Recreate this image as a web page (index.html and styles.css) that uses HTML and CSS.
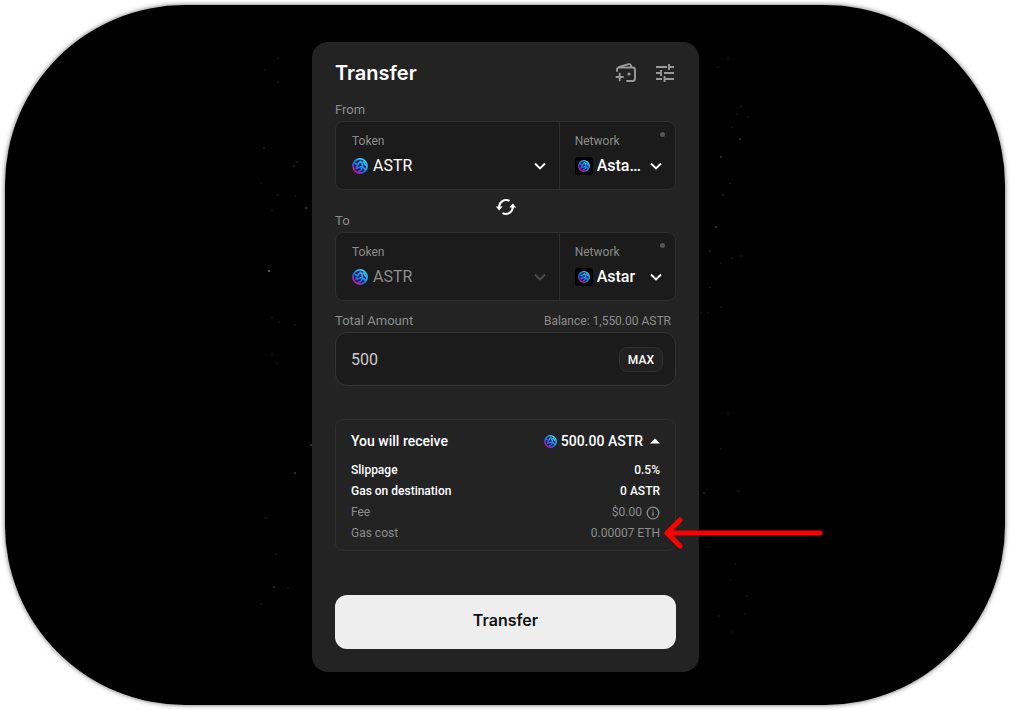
FILE: index.html
```html
<!DOCTYPE html>
<html lang="en">
<head>
<meta charset="utf-8">
<meta name="viewport" content="width=device-width, initial-scale=1">
<title>Transfer</title>
<link rel="stylesheet" href="styles.css">
</head>
<body>
<svg class="sprite" aria-hidden="true">
  <defs>
    <linearGradient id="astar-gradient" gradientUnits="userSpaceOnUse" x1="2" y1="15" x2="13" y2="2">
      <stop offset="0" stop-color="#e6007a"/>
      <stop offset="0.2" stop-color="#b020b0"/>
      <stop offset="0.42" stop-color="#1673f5"/>
      <stop offset="1" stop-color="#36d3fa"/>
    </linearGradient>
    <symbol id="astar" viewBox="0 0 16 16">
      <circle cx="8" cy="8" r="7.600" fill="#14234a"/>
      <g fill="none" stroke="url(#astar-gradient)" stroke-linecap="round">
        <circle cx="8" cy="8" r="7.100" stroke-width="1.700"/>
        <path stroke-width="1.700" d="M8.500 3.500C6 4.500 5.500 8 4 10.500M8.500 3.500C10.500 5 10.500 8 10 10M4 10.500C6.500 10 8 8.500 10 8.500M10 8.500 13 11M6.500 13.500C8.500 13 9.500 11.500 10 10M3 5.500 5.500 6.500M11.500 4 13.500 7"/>
      </g>
    </symbol>
    <symbol id="chevron" viewBox="0 0 12 8">
      <path d="M1 1.500 6 6.500 11 1.500" fill="none" stroke="currentColor" stroke-width="1.900"/>
    </symbol>
  </defs>
</svg>
<main class="stage">
  <svg class="stars" viewBox="0 0 500 700" aria-hidden="true">
    <g fill="#777"><circle cx="14" cy="266" r="1"/></g>
    <g fill="#3c3c3c">
      <circle cx="51" cy="203" r="1"/><circle cx="40" cy="468" r="1"/><circle cx="56" cy="440" r="1"/><circle cx="461" cy="222" r="1"/><circle cx="449" cy="488" r=".8"/><circle cx="19" cy="582" r=".9"/><circle cx="485" cy="134" r=".9"/><circle cx="466" cy="152" r=".9"/><circle cx="9" cy="143" r=".7"/><circle cx="11" cy="513" r=".7"/>
    </g>
    <g fill="#242424">
      <circle cx="23" cy="53" r=".8"/><circle cx="10" cy="65" r=".8"/><circle cx="23" cy="77" r=".7"/><circle cx="42" cy="157" r=".9"/><circle cx="39" cy="161" r=".9"/><circle cx="23" cy="190" r=".9"/><circle cx="40" cy="191" r=".8"/><circle cx="17" cy="205" r=".8"/><circle cx="6" cy="178" r=".8"/><circle cx="17" cy="313" r=".8"/><circle cx="24" cy="317" r=".8"/><circle cx="40" cy="320" r=".8"/><circle cx="17" cy="350" r=".8"/><circle cx="22" cy="358" r=".8"/><circle cx="33" cy="583" r=".8"/><circle cx="21" cy="549" r=".8"/><circle cx="6" cy="599" r=".8"/>
      <circle cx="473" cy="54" r=".8"/><circle cx="463" cy="62" r=".7"/><circle cx="486" cy="101" r=".8"/><circle cx="482" cy="109" r=".8"/><circle cx="477" cy="122" r=".8"/><circle cx="493" cy="112" r=".7"/><circle cx="475" cy="178" r=".8"/><circle cx="468" cy="190" r=".9"/><circle cx="455" cy="246" r="1"/><circle cx="477" cy="253" r=".8"/><circle cx="486" cy="251" r=".8"/><circle cx="466" cy="258" r=".8"/><circle cx="455" cy="282" r=".8"/><circle cx="446" cy="308" r=".8"/><circle cx="453" cy="308" r=".7"/><circle cx="466" cy="302" r=".8"/><circle cx="473" cy="408" r=".8"/><circle cx="466" cy="444" r=".8"/><circle cx="483" cy="486" r=".8"/><circle cx="453" cy="542" r=".8"/><circle cx="480" cy="559" r=".8"/><circle cx="475" cy="575" r=".8"/><circle cx="492" cy="591" r=".8"/><circle cx="464" cy="611" r=".8"/><circle cx="490" cy="609" r=".8"/><circle cx="477" cy="627" r=".8"/>
    </g>
  </svg>
  <form class="card">
    <header class="header">
      <h1 class="title">Transfer</h1>
      <div class="tools">
        <button type="button" class="icon-button" aria-label="Add wallet">
          <svg width="22" height="22" viewBox="0 0 22 22" fill="none" stroke="currentColor" stroke-width="1.900" stroke-linecap="round">
            <path d="M2 9V7.500A2 2 0 0 1 4 5.500H17.500A2.500 2.500 0 0 1 20 8V16.500A2.500 2.500 0 0 1 17.500 19H12M4 5 13.500 2.200Q16 1.600 16.200 5M1.500 15H8M4.700 11.800V18.200"/>
            <circle cx="14" cy="12" r="1.600" fill="currentColor" stroke="none"/>
          </svg>
        </button>
        <button type="button" class="icon-button" aria-label="Settings">
          <svg width="20" height="20" viewBox="0 0 20 20" fill="none" stroke="currentColor" stroke-width="1.900">
            <path d="M1 4H12M14 1V7M14 4H19M1 10H5M6 7V13M9 10H19M1 16H7M9.500 13V19M9.500 16H19"/>
          </svg>
        </button>
      </div>
    </header>

    <h2 class="section-label from-label">From</h2>
    <div class="pair">
      <div class="field token">
        <label class="field-label" for="from-token">Token</label>
        <div class="picker">
          <svg class="coin"><use href="#astar"/></svg>
          <select id="from-token" class="select"><option>ASTR</option></select>
          <svg class="chevron"><use href="#chevron"/></svg>
        </div>
      </div>
      <div class="field network">
        <label class="field-label" for="from-network">Network</label>
        <span class="status"></span>
        <div class="picker">
          <span class="chain"><svg><use href="#astar"/></svg></span>
          <select id="from-network" class="select strong"><option>Astar EVM</option></select>
          <svg class="chevron"><use href="#chevron"/></svg>
        </div>
      </div>
    </div>

    <div class="swap-row">
      <h2 class="section-label to-label">To</h2>
      <button type="button" class="icon-button swap" aria-label="Swap direction">
        <svg width="22" height="22" viewBox="0 0 22 22" fill="none" stroke="currentColor" stroke-width="2">
          <path d="M4.200 11.500A7 7 0 0 1 14.500 4.900M17.800 10.500A7 7 0 0 1 7.500 17.100"/>
          <path d="M.8 10.500H7.600L4.200 14.500ZM14.400 11.500H21.200L17.800 7.500Z" fill="currentColor" stroke="none"/>
        </svg>
      </button>
    </div>
    <div class="pair">
      <div class="field token">
        <label class="field-label" for="to-token">Token</label>
        <div class="picker muted">
          <svg class="coin"><use href="#astar"/></svg>
          <select id="to-token" class="select" disabled><option>ASTR</option></select>
          <svg class="chevron"><use href="#chevron"/></svg>
        </div>
      </div>
      <div class="field network">
        <label class="field-label" for="to-network">Network</label>
        <span class="status"></span>
        <div class="picker">
          <span class="chain"><svg><use href="#astar"/></svg></span>
          <select id="to-network" class="select strong"><option>Astar</option></select>
          <svg class="chevron"><use href="#chevron"/></svg>
        </div>
      </div>
    </div>

    <div class="amount-head">
      <label class="section-label" for="amount">Total Amount</label>
      <span class="balance">Balance: 1,550.00 ASTR</span>
    </div>
    <div class="amount">
      <input id="amount" class="amount-input" type="text" inputmode="decimal" value="500">
      <button type="button" class="max">MAX</button>
    </div>

    <section class="receipt">
      <button type="button" class="receipt-head" aria-expanded="true">
        <span>You will receive</span>
        <span class="receipt-total">
          <svg class="coin-small"><use href="#astar"/></svg>
          <span>500.00 ASTR</span>
          <svg class="caret" width="10" height="6" viewBox="0 0 10 6"><path d="M0 5.500 5 .5 10 5.500Z" fill="currentColor"/></svg>
        </span>
      </button>
      <dl class="details">
        <div class="row bright"><dt>Slippage</dt><dd>0.5%</dd></div>
        <div class="row bright"><dt>Gas on destination</dt><dd>0 ASTR</dd></div>
        <div class="row">
          <dt>Fee</dt>
          <dd>$0.00
            <svg class="info" width="14" height="14" viewBox="0 0 14 14" fill="none" stroke="currentColor" stroke-width="1.300"><circle cx="7" cy="7" r="5.800"/><path d="M7 6.200V10.200M7 3.800V5.200"/></svg>
          </dd>
        </div>
        <div class="row">
          <dt>Gas cost</dt><dd>0.00007 ETH</dd>
          <svg class="pointer" viewBox="0 0 164 34" fill="none" stroke="#f00" stroke-width="5" stroke-linecap="round" stroke-linejoin="round" aria-hidden="true"><path d="M160 17H7M20 4 7 17 20 30"/></svg>
        </div>
      </dl>
    </section>

    <button type="submit" class="submit">Transfer</button>
  </form>
</main>
</body>
</html>
```
FILE: styles.css
```css
* {
  box-sizing: border-box;
}

body {
  margin: 0;
  min-height: 100vh;
  padding: 5px;
  display: flex;
  background: #fff;
  font-family: Roboto, "Liberation Sans", sans-serif;
  font-size: 12px;
  color: #fff;
}

button,
input,
select {
  font: inherit;
  color: inherit;
  background: none;
  border: 0;
  padding: 0;
  margin: 0;
}

h1, h2, dl, dd {
  margin: 0;
}

.sprite {
  position: absolute;
  width: 0;
  height: 0;
}

.stage {
  position: relative;
  flex: 1;
  display: flex;
  justify-content: center;
  align-items: flex-start;
  padding: 37px 0 33px 1px;
  background: #000;
  border-radius: 180px;
  box-shadow: 0 0 5px rgba(0, 0, 0, 0.6);
}

.stars {
  position: absolute;
  top: 0;
  left: calc(50% - 250px);
  width: 500px;
  height: 700px;
}

.card {
  position: relative;
  width: 100%;
  max-width: 387px;
  padding: 17px 23px 23px;
  background: #232323;
  border-radius: 16px;
}

.header {
  display: flex;
  justify-content: space-between;
  align-items: center;
  height: 28px;
}

.title {
  font-family: Inter, sans-serif;
  font-size: 20px;
  font-weight: 600;
}

.tools {
  display: flex;
  align-items: center;
  gap: 18px;
  padding-right: 1px;
  color: #999;
}

.icon-button {
  display: flex;
  cursor: pointer;
}

.section-label {
  font-size: 13px;
  font-weight: 400;
  line-height: 16px;
  color: #8c8c8c;
}

.from-label {
  margin: 15px 0 3px;
}

.pair {
  display: grid;
  grid-template-columns: 224fr 117fr;
  background: #1b1b1b;
  border: 1px solid #2e2e2e;
  border-radius: 8px;
}

.field {
  position: relative;
  min-width: 0;
  padding: 11px 13px 11px 16px;
}

.network {
  border-left: 1px solid #2e2e2e;
  padding-left: 15px;
}

.field-label {
  display: block;
  margin-bottom: 5px;
  font-size: 12px;
  line-height: 16px;
  color: #8c8c8c;
}

.status {
  position: absolute;
  top: 10px;
  right: 10px;
  width: 5px;
  height: 5px;
  border-radius: 50%;
  background: #555;
}

.picker {
  display: flex;
  align-items: center;
  height: 24px;
}

.coin {
  width: 16px;
  height: 16px;
  margin-right: 5px;
}

.chain {
  display: flex;
  align-items: center;
  justify-content: center;
  flex: none;
  width: 18px;
  height: 18px;
  margin-right: 4px;
  background: #000;
  border-radius: 3px;
}

.chain svg {
  width: 12px;
  height: 12px;
}

.select {
  flex: 1;
  min-width: 0;
  appearance: none;
  font-size: 16px;
  line-height: 24px;
  overflow: hidden;
  text-overflow: ellipsis;
  white-space: nowrap;
}

.select:disabled {
  opacity: 1;
}

.strong {
  font-weight: 500;
}

.chevron {
  flex: none;
  width: 12px;
  height: 8px;
  margin-left: 6px;
}

.muted .select {
  color: #8c8c8c;
}

.muted .chevron {
  color: #4c4c4c;
}

.swap-row {
  display: grid;
  grid-template-columns: 1fr auto 1fr;
  min-height: 42px;
  padding: 6px 0 3px;
}

.to-label {
  align-self: end;
}

.swap {
  align-self: start;
}

.amount-head {
  display: flex;
  justify-content: space-between;
  margin: 12px 0 3px;
  padding-right: 5px;
}

.balance {
  line-height: 16px;
  color: #8c8c8c;
}

.amount {
  display: flex;
  align-items: center;
  height: 54px;
  padding: 0 12px 0 15px;
  background: #1b1b1b;
  border: 1px solid #333;
  border-radius: 12px;
}

.amount-input {
  flex: 1;
  min-width: 0;
  font-size: 16px;
  color: #ccc;
}

.max {
  height: 25px;
  padding: 2px 8px 0;
  background: #222;
  border: 1px solid #2e2e2e;
  border-radius: 8px;
  font-weight: 500;
}

.receipt {
  margin-top: 33px;
  padding: 11px 15px 6px;
  border: 1px solid #2e2e2e;
  border-radius: 8px;
}

.receipt-head {
  display: flex;
  justify-content: space-between;
  width: 100%;
  font-size: 14px;
  font-weight: 500;
  line-height: 20px;
}

.receipt-total {
  display: flex;
  align-items: center;
}

.coin-small {
  width: 13px;
  height: 13px;
  margin-right: 4px;
}

.caret {
  margin-left: 7px;
}

.details {
  margin-top: 9px;
}

.row {
  position: relative;
  display: flex;
  justify-content: space-between;
  line-height: 21px;
  color: #8c8c8c;
}

.row dd {
  display: flex;
  align-items: center;
  gap: 4px;
}

.bright {
  font-weight: 500;
  color: #fff;
}

.pointer {
  position: absolute;
  top: -7px;
  left: 100%;
  width: 164px;
  height: 34px;
}

.submit {
  width: 100%;
  height: 54px;
  margin-top: 44px;
  padding-bottom: 4px;
  background: #eee;
  border-radius: 12px;
  font-family: Inter, sans-serif;
  font-size: 16px;
  font-weight: 600;
  color: #111;
}
```
